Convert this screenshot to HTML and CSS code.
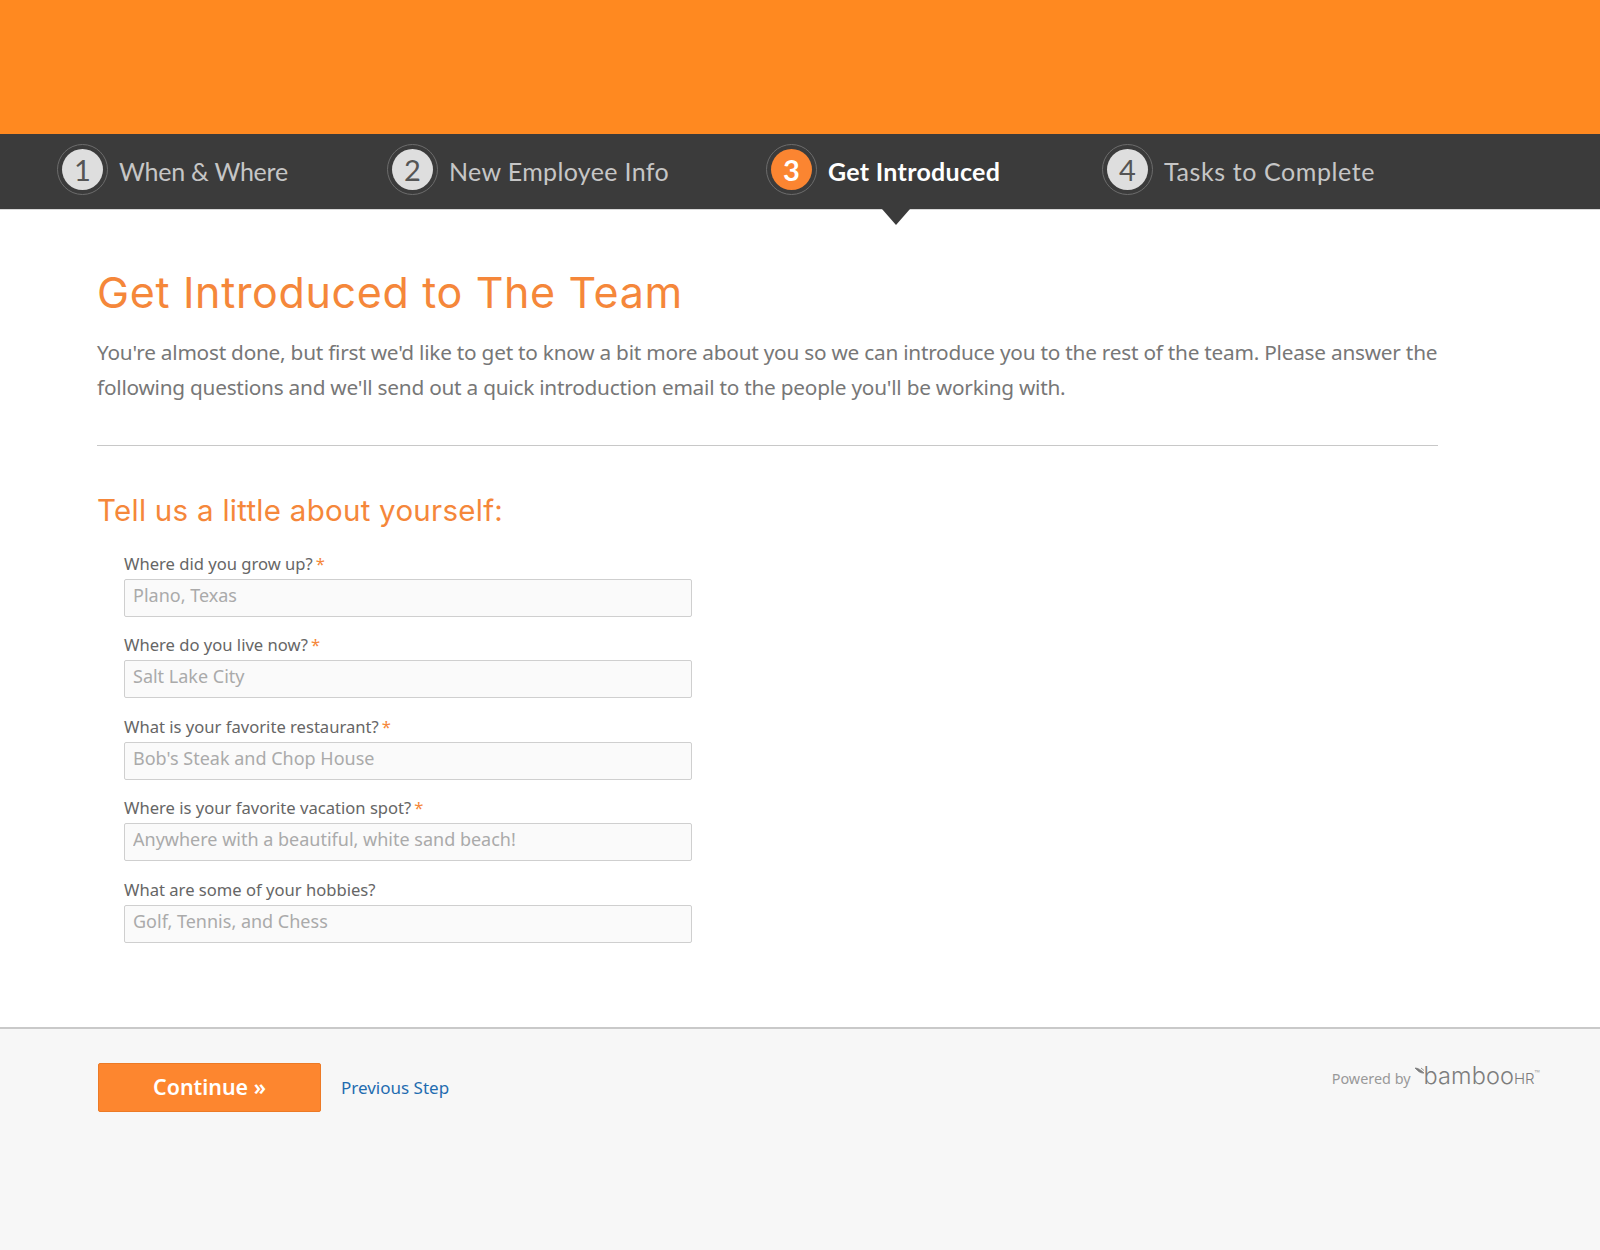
FILE: index.html
```html
<!DOCTYPE html>
<html lang="en">
<head>
<meta charset="utf-8">
<title>Get Introduced</title>
<link rel="stylesheet" href="styles.css">
</head>
<body>
<header class="banner"></header>
<nav class="steps">
  <div class="step step-1"><span class="ring"><span class="num">1</span></span><span class="step-label">When &amp; Where</span></div>
  <div class="step step-2"><span class="ring"><span class="num">2</span></span><span class="step-label">New Employee Info</span></div>
  <div class="step step-3 active"><span class="ring"><span class="num">3</span></span><span class="step-label">Get Introduced</span><span class="pointer"></span></div>
  <div class="step step-4"><span class="ring"><span class="num">4</span></span><span class="step-label">Tasks to Complete</span></div>
</nav>
<main class="content">
  <h1>Get Introduced to The Team</h1>
  <p class="intro">You're almost done, but first we'd like to get to know a bit more about you so we can introduce you to the rest of the team. Please answer the following questions and we'll send out a quick introduction email to the people you'll be working with.</p>
  <hr class="rule">
  <h2>Tell us a little about yourself:</h2>
  <form class="fields">
    <div class="field"><label>Where did you grow up?<span class="req">*</span></label><input type="text" placeholder="Plano, Texas"></div>
    <div class="field"><label>Where do you live now?<span class="req">*</span></label><input type="text" placeholder="Salt Lake City"></div>
    <div class="field"><label>What is your favorite restaurant?<span class="req">*</span></label><input type="text" placeholder="Bob's Steak and Chop House"></div>
    <div class="field"><label>Where is your favorite vacation spot?<span class="req">*</span></label><input type="text" placeholder="Anywhere with a beautiful, white sand beach!"></div>
    <div class="field"><label>What are some of your hobbies?</label><input type="text" placeholder="Golf, Tennis, and Chess"></div>
  </form>
</main>
<footer class="footer">
  <button class="continue" type="button">Continue »</button>
  <a class="prev" href="#">Previous Step</a>
  <div class="powered">
    <span class="powered-by">Powered by</span>
    <svg class="leaf" width="12" height="12" viewBox="0 0 12 12"><path d="M0 1 C3 1 6 3 9 6 C7 6.500 4 5 2.500 3.500 Z M6 1 L9 3.500" fill="#7d7d7d" stroke="#7d7d7d" stroke-width=".8"/></svg>
    <span class="logo">bamboo</span><span class="logo-hr">HR</span><span class="logo-tm">™</span>
  </div>
</footer>
</body>
</html>
```
FILE: styles.css
```css
* { box-sizing: border-box; }
html, body { margin: 0; padding: 0; }
body { width: 1600px; height: 1250px; background: #f7f7f7; font-family: "Noto Sans", "Open Sans", sans-serif; display: flex; flex-direction: column; overflow: hidden; }
.banner { height: 134px; background: #ff8920; flex: none; }
.steps { height: 76px; flex: none; background: #3b3b3b; border-bottom: 1px solid #d8d8d8; display: flex; align-items: center; font-family: Lato, sans-serif; }
.step { position: relative; display: flex; align-items: center; height: 51px; margin-top: -4px; }
.step-1 { margin-left: 57px; width: 330px; }
.step-2 { width: 379px; }
.step-3 { width: 336px; }
.ring { width: 51px; height: 51px; border: 1.500px solid #6c6c6c; border-radius: 50%; display: flex; align-items: center; justify-content: center; flex: none; }
.num { width: 41px; height: 41px; border-radius: 50%; background: #dedede; color: #555; font-size: 29px; font-weight: 400; line-height: 41px; text-align: center; }
.step-label { margin-left: 11px; margin-top: 3px; font-size: 25px; font-weight: 400; color: #c6c6c6; letter-spacing: .3px; white-space: nowrap; }
.step-1 .step-label { letter-spacing: -.25px; }
.step-2 .step-label { letter-spacing: .35px; }
.step-4 .step-label { letter-spacing: .6px; }
.active .num { background: #fb8531; color: #fff; font-weight: 700; }
.active .step-label { color: #fff; font-weight: 700; }
.pointer { position: absolute; left: 116px; top: 65px; width: 0; height: 0; border-left: 14px solid transparent; border-right: 14px solid transparent; border-top: 16px solid #3b3b3b; }
.content { flex: none; height: 819px; background: #fff; padding: 0 162px 0 97px; border-bottom: 2px solid #c9c9c9; }
h1 { margin: 54px 0 0; font-family: Inter, sans-serif; font-weight: 400; font-size: 43px; line-height: 56px; color: #f5873a; letter-spacing: .65px; }
.intro { margin: 15px 0 0; font-size: 20.800px; letter-spacing: -.24px; line-height: 35px; color: #777; }
.rule { margin: 40px 0 0; border: 0; border-top: 1px solid #c8c8c8; }
h2 { margin: 45px 0 0; font-family: Inter, sans-serif; font-weight: 400; font-size: 29.500px; letter-spacing: .27px; line-height: 38px; color: #f5873a; }
.fields { margin: 21px 0 0 27px; width: 568px; display: flex; flex-direction: column; gap: 14.400px; }
.field { display: flex; flex-direction: column; }
label { font-size: 16.600px; line-height: 27px; margin-bottom: 2px; color: #666; }
.req { color: #f5873a; margin-left: 3px; }
input { width: 568px; height: 38px; border: 1px solid #cfcfcf; border-radius: 2px; background: #fafafa; padding: 0 8px 6px; font-family: inherit; font-size: 18px; color: #aaa; outline: 0; }
input::placeholder { color: #aaa; opacity: 1; }
.footer { flex: 1; position: relative; display: flex; align-items: flex-start; padding: 34px 0 0 98px; background: #f7f7f7; }
.continue { width: 223px; height: 49px; background: #fd862f; border: 1px solid #ec7a26; border-radius: 2px; color: #fff; font-family: inherit; font-size: 21.400px; font-weight: 600; padding: 0 0 2px; }
.prev { margin: 13px 0 0 20px; font-size: 17px; line-height: 24px; color: #1f6cb0; text-decoration: none; }
.powered { position: absolute; right: 60px; top: 35px; display: flex; align-items: baseline; color: #8a8a8a; }
.powered-by { font-size: 14.400px; color: #999; margin-right: 4px; }
.leaf { align-self: flex-start; margin-top: 3px; }
.logo { font-family: Inter, sans-serif; font-size: 23.500px; font-weight: 300; line-height: 24px; color: #7d7d7d; margin-left: -3px; letter-spacing: .1px; }
.logo-hr { font-family: Inter, sans-serif; font-size: 15px; font-weight: 300; color: #7d7d7d; }
.logo-tm { font-size: 7px; align-self: flex-start; margin-top: 4px; color: #aaa; }
```
